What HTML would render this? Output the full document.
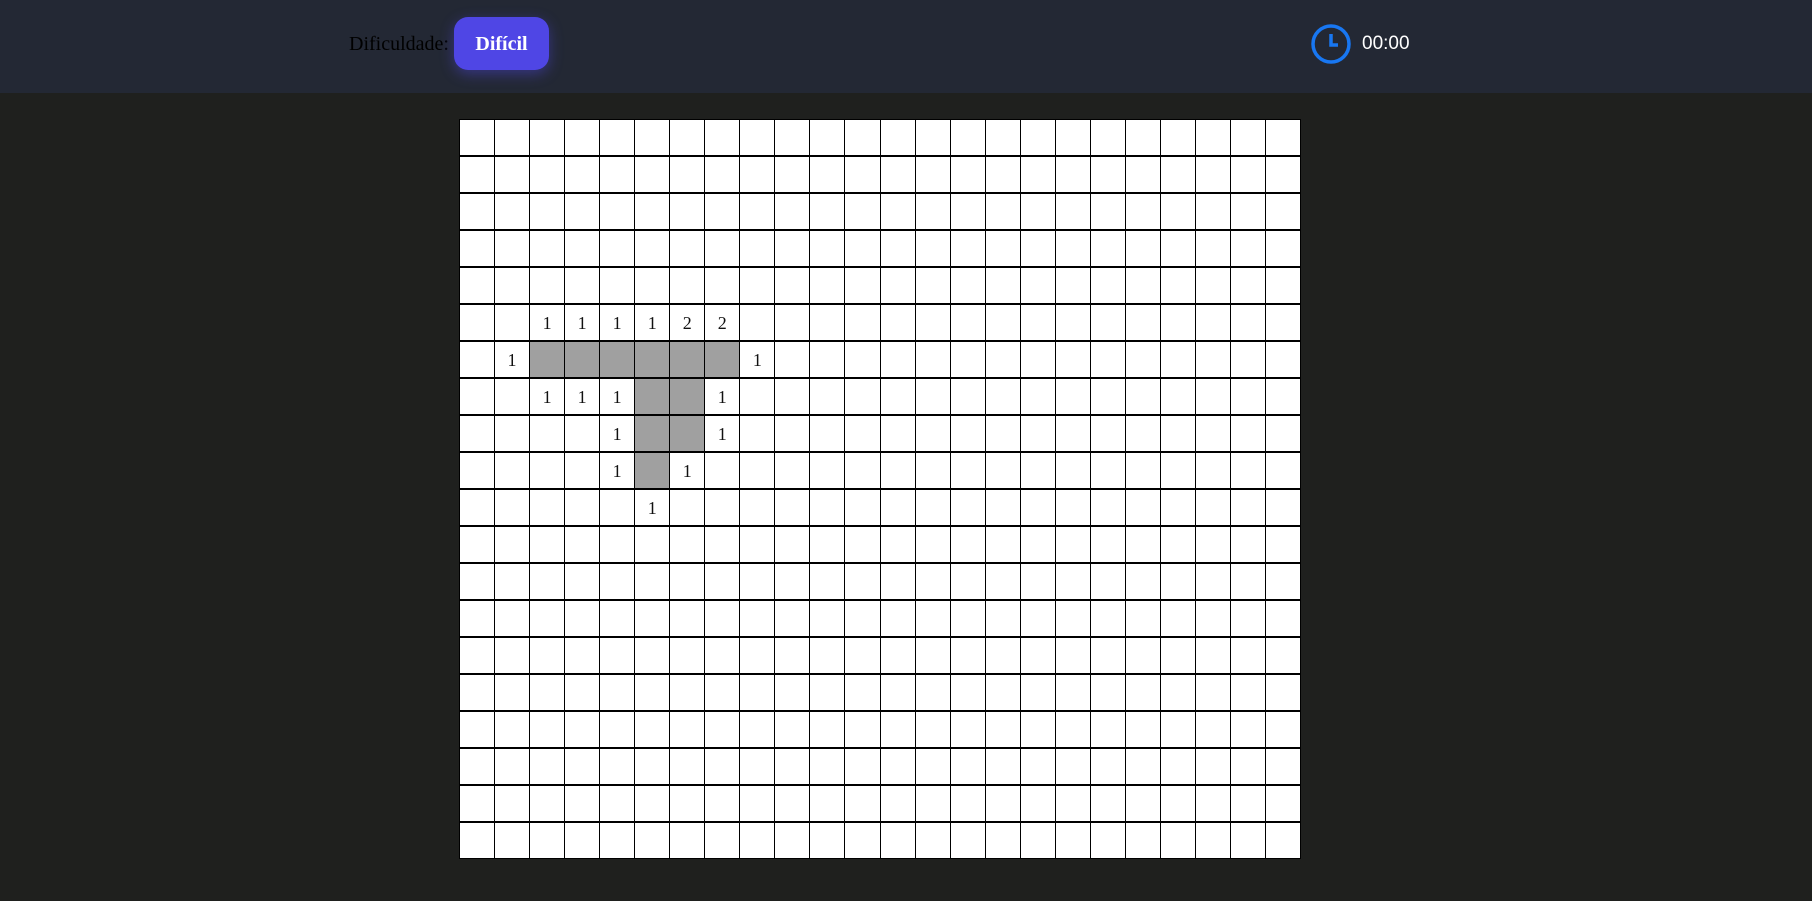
<!DOCTYPE html>
<html><head><meta charset="utf-8"><style>
html,body{margin:0;padding:0;width:1812px;height:901px;overflow:hidden;background:#1f201e;font-family:"Liberation Serif",serif}
.hdr{position:absolute;left:0;top:0;width:1812px;height:93px;background:#232834}
.lbl{position:absolute;left:349px;top:33px;font-size:20px;color:#000}
.btn{position:absolute;left:454px;top:17px;width:95px;height:53px;background:#4f46e5;border-radius:14px;box-shadow:0 4px 14px rgba(79,70,229,.45);color:#fff;font-weight:bold;font-size:20px;text-align:center;line-height:55px}
.clk{position:absolute;left:1311px;top:24px}
.time{position:absolute;left:1362px;top:33px;color:#fff;font-size:19px;font-family:"Liberation Sans",sans-serif}
.board{position:absolute;left:459px;top:119px;width:840px;height:738px;padding:1px;background:#000;display:grid;grid-template-columns:repeat(24,1fr);grid-template-rows:repeat(20,35px);column-gap:1px;row-gap:2px}
.board div{background:#fff;text-align:center;line-height:37px;font-size:18px;color:#111}
.board div.g{background:#a0a0a0}
</style></head><body>
<div class="hdr">
<div class="lbl">Dificuldade:</div>
<div class="btn">Difícil</div>
<svg class="clk" width="40" height="40" viewBox="0 0 40 40"><circle cx="20" cy="20" r="18" fill="none" stroke="#1877f2" stroke-width="3.5"/><path d="M20 10 V21 H27" fill="none" stroke="#1877f2" stroke-width="3.5"/></svg>
<div class="time">00:00</div>
</div>
<div class="board" id="b"></div>
<script>
var m={"5,2":"1","5,3":"1","5,4":"1","5,5":"1","5,6":"2","5,7":"2","6,1":"1","6,8":"1","7,2":"1","7,3":"1","7,4":"1","7,7":"1","8,4":"1","8,7":"1","9,4":"1","9,6":"1","10,5":"1"};
var g={"6,2":1,"6,3":1,"6,4":1,"6,5":1,"6,6":1,"6,7":1,"7,5":1,"7,6":1,"8,5":1,"8,6":1,"9,5":1};
var h="";for(var r=0;r<20;r++)for(var c=0;c<24;c++){var k=r+","+c;h+='<div'+(g[k]?' class="g"':'')+'>'+(m[k]||'')+'</div>';}
document.getElementById("b").innerHTML=h;
</script>
</body></html>
